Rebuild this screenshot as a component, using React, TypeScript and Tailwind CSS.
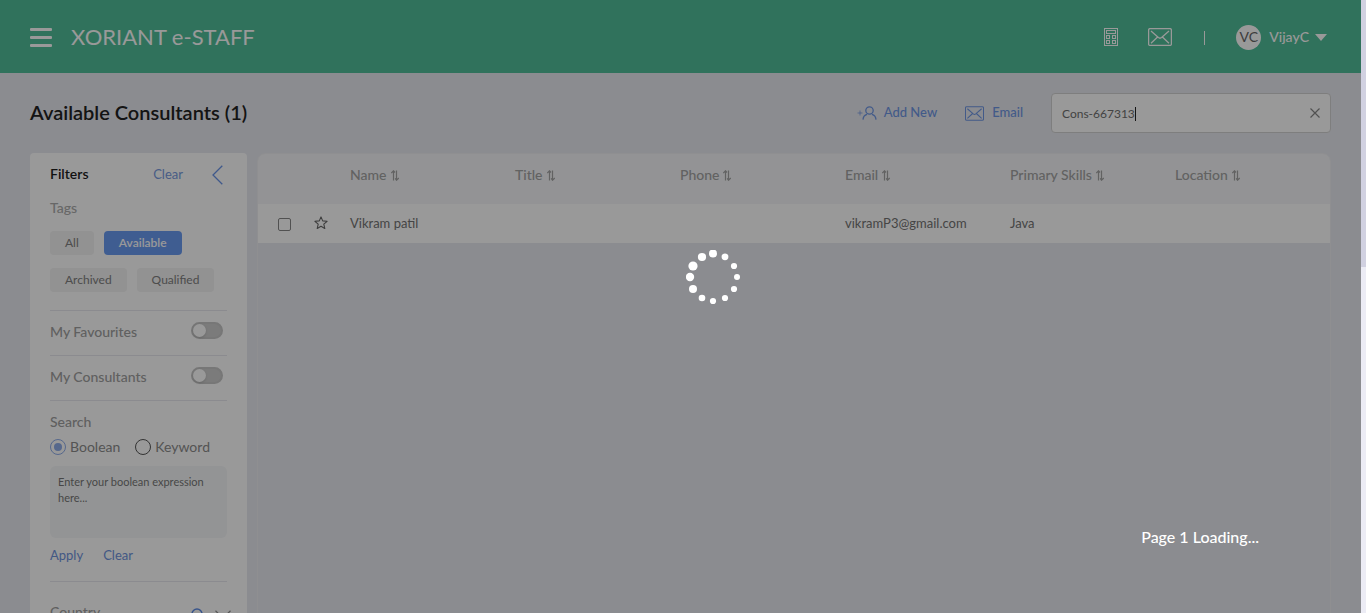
import React, { useState } from 'react';

function MailIcon({ className }: { className: string }) {
  return (
    <svg viewBox="0 0 24 18" className={className} fill="none" stroke="currentColor" aria-hidden="true">
      <rect x="0.6" y="0.6" width="22.8" height="16.8" rx="1.5" strokeWidth="1.3" />
      <path d="M3 3l7.4 6.6q1.6 1.3 3.2 0L21 3M3 15.2l6.6-6.2M21 15.2L14.4 9" strokeWidth="1.3" />
    </svg>
  );
}

function CalculatorIcon() {
  return (
    <svg viewBox="0 0 14 18" className="h-[18px] w-3.5" fill="none" stroke="currentColor" aria-hidden="true">
      <rect x="0.5" y="0.5" width="13" height="17" />
      <rect x="2.5" y="2.5" width="9" height="3" />
      <rect x="2.5" y="7.5" width="3" height="3" />
      <rect x="8.5" y="7.5" width="3" height="3" />
      <rect x="2.5" y="12.5" width="3" height="3" />
      <rect x="8.5" y="12.5" width="3" height="3" />
    </svg>
  );
}

function AddUserIcon() {
  return (
    <svg viewBox="0 0 20 14" className="h-3.5 w-5" fill="none" stroke="currentColor" aria-hidden="true">
      <path d="M0.5 7h5M3 4.5v5" strokeWidth="0.7" />
      <circle cx="12.5" cy="4.5" r="3.7" strokeWidth="1.3" />
      <path d="M6 13.6c.2-2.8 1.8-4.7 4-5.3M19 13.6c-.2-2.8-1.8-4.7-4-5.3" strokeWidth="1.3" />
    </svg>
  );
}

function SortIcon() {
  return (
    <svg viewBox="0 0 8 11" className="h-[11px] w-2" fill="none" stroke="currentColor" strokeWidth="1.2" aria-hidden="true">
      <path d="M2.5 10.5V1M0.3 3L2.5 0.8L4 2.5M5.5 0.5V10M4.200 8.3L5.5 10.2L7.8 8" />
    </svg>
  );
}

function Toggle({ id, label }: { id: string; label: string }) {
  return (
    <div className="flex h-[45px] items-center justify-between border-t border-[#e8e8ee] pr-1 pb-1.5">
      <label htmlFor={id} className="pt-1 text-sm font-medium text-[#a0a0a0]">
        {label}
      </label>
      <input
        id={id}
        type="checkbox"
        role="switch"
        className="h-[17px] w-8 appearance-none rounded-full border-2 border-[#c6c6c6] bg-[#cdcdcd] before:block before:size-[13px] before:rounded-full before:bg-white before:shadow before:content-[''] checked:bg-[#6a9bf4] checked:before:translate-x-[15px]"
      />
    </div>
  );
}

function Tag({ label, active = false }: { label: string; active?: boolean }) {
  return (
    <button
      type="button"
      className={
        active
          ? 'h-6 rounded bg-[#6a9bf2] px-[15px] text-xs font-semibold text-white'
          : 'h-6 rounded bg-[#f3f3f3] px-[15px] text-xs text-[#808080]'
      }
    >
      {label}
    </button>
  );
}

function Filters() {
  return (
    <aside className="h-[640px] w-[217px] shrink-0 rounded-t bg-white px-5">
      <div className="flex h-11 items-center">
        <h2 className="flex-1 pb-0.5 text-sm font-semibold text-[#1d1d1d]">Filters</h2>
        <a href="#clear" className="mr-[29px] pb-px text-[13px] text-[#789ae0]">
          Clear
        </a>
        <button type="button" aria-label="Collapse filters" className="mr-1 text-[#6a94e8]">
          <svg viewBox="0 0 11 20" className="h-5 w-[11px]" fill="none" stroke="currentColor" strokeWidth="1.300">
            <path d="M10.300 0.800L1 10l9.300 9.200" />
          </svg>
        </button>
      </div>
      <h3 className="mt-px text-sm font-medium text-[#acacac]">Tags</h3>
      <div className="mt-[13px] mb-[18px] flex flex-wrap gap-x-2.5 gap-y-[13px]">
        <Tag label="All" />
        <Tag label="Available" active />
        <Tag label="Archived" />
        <Tag label="Qualified" />
      </div>
      <Toggle id="favourites" label="My Favourites" />
      <Toggle id="consultants" label="My Consultants" />
      <div className="border-t border-[#e8e8ee] pt-[11px]">
        <h3 className="text-sm font-medium text-[#a0a0a0]">Search</h3>
        <div className="mt-[3px] flex gap-[15px] text-sm leading-6 text-[#8c8c8c]">
          <label className="flex items-center gap-1">
            <input
              type="radio"
              name="mode"
              defaultChecked
              className="grid size-4 appearance-none place-items-center rounded-full border border-[#555] checked:border-[#8fadea] checked:before:size-2 checked:before:rounded-full checked:before:bg-[#8fadea] checked:before:content-['']"
            />
            Boolean
          </label>
          <label className="flex items-center gap-1">
            <input
              type="radio"
              name="mode"
              className="grid size-4 appearance-none place-items-center rounded-full border border-[#555] checked:border-[#8fadea] checked:before:size-2 checked:before:rounded-full checked:before:bg-[#8fadea] checked:before:content-['']"
            />
            Keyword
          </label>
        </div>
        <textarea
          aria-label="Boolean expression"
          placeholder="Enter your boolean expression here..."
          className="mt-[7px] block h-[72px] w-full resize-none rounded-md bg-[#f5f7f8] p-2 text-[11px] leading-4 placeholder:text-[#777]"
        />
        <div className="mt-[7px] flex gap-5 pb-4 text-[13px] leading-5 text-[#6f93dd]">
          <a href="#apply">Apply</a>
          <a href="#clear-search">Clear</a>
        </div>
      </div>
      <div className="flex items-start border-t border-[#e8e8ee] pt-5">
        <h3 className="flex-1 text-sm font-medium text-[#a0a0a0]">Country</h3>
        <svg viewBox="0 0 14 14" className="mt-1.5 mr-2.5 size-3.5 text-[#5e8de8]" fill="none" stroke="currentColor" strokeWidth="1.500">
          <circle cx="6" cy="6" r="5" />
          <path d="M10 10l3.500 3.500" />
        </svg>
        <svg viewBox="0 0 16 9" className="mt-2 -mr-1 h-[9px] w-4 text-[#909090]" fill="none" stroke="currentColor" strokeWidth="1.200">
          <path d="M0.500 0.800L8 8l7.500-7.200" />
        </svg>
      </div>
    </aside>
  );
}

const columns = ['Name', 'Title', 'Phone', 'Email', 'Primary Skills', 'Location'];
const consultant = ['Vikram patil', '', '', 'vikramP3@gmail.com', 'Java', ''];

function ConsultantTable() {
  return (
    <section className="h-[640px] min-w-0 flex-1 overflow-hidden rounded-t-lg border border-[#eeeef2]">
      <table className="w-full table-fixed text-left">
        <thead className="bg-[#f5f6f8]">
          <tr className="h-[50px]">
            <th className="w-14" aria-label="Select" />
            <th className="w-9" aria-label="Favourite" />
            {columns.map((name) => (
              <th key={name} className="w-[165px] pb-2 text-sm font-medium text-[#a3a3a3] last:w-auto">
                <button type="button" className="flex items-center gap-1">
                  {name}
                  <SortIcon />
                </button>
              </th>
            ))}
          </tr>
        </thead>
        <tbody className="bg-white">
          <tr className="h-[39px]">
            <td className="pt-0.5 pl-5">
              <input
                type="checkbox"
                aria-label="Select Vikram patil"
                className="block size-[13px] appearance-none rounded-[2px] border border-[#888] checked:bg-[#6a9bf2]"
              />
            </td>
            <td>
              <button type="button" aria-label="Add to favourites" className="block text-[#666]">
                <svg viewBox="0 0 14 14" className="mb-0.5 size-3.5" fill="none" stroke="currentColor" strokeWidth="1.100" strokeLinejoin="round">
                  <path d="M7 0.900l1.700 4 4.400.4-3.300 2.900 1 4.300L7 10.200l-3.800 2.300 1-4.300L.9 5.300l4.400-.4z" />
                </svg>
              </button>
            </td>
            {consultant.map((value, i) => (
              <td key={columns[i]} className="text-[13px] text-[#737373]">
                {value}
              </td>
            ))}
          </tr>
        </tbody>
      </table>
    </section>
  );
}

const dots = [
  [27, 3.5, 4], [39, 6.800, 3.400], [48, 16, 3.100], [51, 27, 3], [48, 39, 3.100], [39, 48, 3.100],
  [27, 51, 3.100], [16, 48, 3.300], [7, 39, 4], [4, 27, 4.200], [7, 16, 4.600], [16, 7, 4.100],
];

function LoadingOverlay() {
  return (
    <div role="status" className="absolute inset-0 z-10 bg-black/40">
      <svg viewBox="0 0 55 55" className="absolute top-[250px] left-[686px] size-[55px]" fill="#fff" aria-hidden="true">
        {dots.map(([x, y, r]) => (
          <circle key={`${x}-${y}`} cx={x} cy={y} r={r} />
        ))}
      </svg>
      <p className="absolute top-[525px] right-[102px] text-base leading-6 font-medium text-white">Page 1 Loading...</p>
    </div>
  );
}

export default function App() {
  const [query, setQuery] = useState('Cons-667313');
  return (
    <div className="flex h-screen overflow-hidden bg-[#e8e9f1] font-['Lato',sans-serif]">
      <div className="relative min-w-0 flex-1 overflow-hidden">
        <header className="flex h-[73px] items-center bg-[#50be99] pr-[34px] pl-[30px] text-white">
          <button type="button" aria-label="Menu" className="flex flex-col gap-[5px] pt-0.5">
            <span className="h-[3px] w-[22px] rounded-[1px] bg-white" />
            <span className="h-[3px] w-[22px] rounded-[1px] bg-white" />
            <span className="h-[3px] w-[22px] rounded-[1px] bg-white" />
          </button>
          <h1 className="ml-[19px] flex-1 text-[22px]">XORIANT e-STAFF</h1>
          <a href="#calculator" aria-label="Calculator">
            <CalculatorIcon />
          </a>
          <a href="#mail" aria-label="Mail" className="ml-[30px]">
            <MailIcon className="h-[18px] w-6" />
          </a>
          <span className="mt-0.5 ml-8 h-3.5 w-px bg-white" />
          <button type="button" className="ml-[31px] flex items-center pt-px text-sm font-medium">
            <span className="grid size-[25px] place-items-center rounded-full bg-white text-sm font-normal text-[#666]">VC</span>
            <span className="ml-2">VijayC</span>
            <svg viewBox="0 0 12 7" className="ml-1.5 h-[7px] w-3" fill="currentColor" aria-hidden="true">
              <path d="M0 0h12L6 7z" />
            </svg>
          </button>
        </header>
        <main className="pr-[30px] pl-[30px]">
          <div className="flex h-20 items-center">
            <h2 className="flex-1 pb-0.5 text-xl font-semibold text-[#222]">Available Consultants (1)</h2>
            <a href="#add" className="flex items-center gap-[7px] text-[13px] font-medium text-[#6f97e4]">
              <AddUserIcon />
              Add New
            </a>
            <a href="#email" className="ml-7 flex items-center gap-2 text-[13px] font-medium text-[#6f97e4]">
              <MailIcon className="h-[15px] w-[19px]" />
              Email
            </a>
            <div className="ml-7 flex h-10 w-[280px] items-center rounded border border-[#d2d2d2] bg-white px-2.5">
              <div className="flex flex-1 items-center pt-px">
                <input
                  aria-label="Search consultants"
                  value={query}
                  onChange={(e) => setQuery(e.target.value)}
                  className="field-sizing-content text-xs text-[#707070] outline-none"
                />
                <span className="h-3.5 w-px bg-[#222]" />
              </div>
              <button type="button" aria-label="Clear search" onClick={() => setQuery('')} className="text-[#888]">
                <svg viewBox="0 0 10 10" className="size-2.5" fill="none" stroke="currentColor" strokeWidth="1.200">
                  <path d="M0.500 0.500l9 9M9.500 0.500l-9 9" />
                </svg>
              </button>
            </div>
          </div>
          <div className="flex items-start gap-2.5">
            <Filters />
            <ConsultantTable />
          </div>
        </main>
        <LoadingOverlay />
      </div>
      <div className="w-[5px] bg-[#ececf5]" aria-hidden="true">
        <div className="h-[267px] bg-[#d1d1e1]" />
      </div>
    </div>
  );
}
